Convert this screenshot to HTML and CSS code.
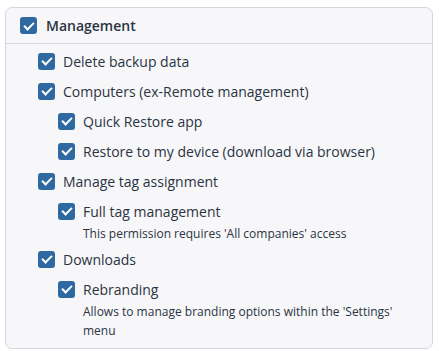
FILE: index.html
```html
<!DOCTYPE html>
<html>
<head>
    <meta charset="UTF-8">
    <title>Permissions</title>
    <link rel="stylesheet" href="styles.css">
</head>
<body>
    <div class="card">
        <div class="card-head">
            <span class="check"></span>
            <span class="head-title">Management</span>
        </div>
        <ul class="perm-list">
            <li><div class="perm"><span class="check"></span>Delete backup data</div></li>
            <li>
                <div class="perm"><span class="check"></span>Computers (ex-Remote management)</div>
                <ul class="perm-list sub">
                    <li><div class="perm"><span class="check"></span>Quick Restore app</div></li>
                    <li><div class="perm"><span class="check"></span>Restore to my device (download via browser)</div></li>
                </ul>
            </li>
            <li>
                <div class="perm"><span class="check"></span>Manage tag assignment</div>
                <ul class="perm-list sub">
                    <li>
                        <div class="perm"><span class="check"></span>Full tag management</div>
                        <p class="hint">This permission requires 'All companies' access</p>
                    </li>
                </ul>
            </li>
            <li>
                <div class="perm"><span class="check"></span>Downloads</div>
                <ul class="perm-list sub">
                    <li>
                        <div class="perm"><span class="check"></span>Rebranding</div>
                        <p class="hint">Allows to manage branding options within the 'Settings' menu</p>
                    </li>
                </ul>
            </li>
        </ul>
    </div>
</body>
</html>
```

FILE: styles.css
```css
body {
    margin: 0;
    padding: 7px 6px 0 5px;
    font-family: "Open Sans", Arial, sans-serif;
    color: #2a3441;
    background: #fff;
}
.card {
    background: #f7f7fa;
    border: 1px solid #d6d6de;
    border-radius: 7px;
    height: 342px;
    box-sizing: border-box;
}
.card-head {
    display: flex;
    align-items: center;
    height: 35px;
    padding-left: 14px;
    border-bottom: 1px solid #d6d6de;
}
.head-title {
    font-size: 14px;
    font-weight: 600;
    margin-left: 9px;
}
.check {
    width: 17px;
    height: 17px;
    border-radius: 3px;
    background: #2f69a1;
    flex-shrink: 0;
    display: inline-flex;
    align-items: center;
    justify-content: center;
}
.check::after {
    content: "";
    width: 8px;
    height: 4px;
    border-left: 2.5px solid #fff;
    border-bottom: 2.5px solid #fff;
    transform: translate(0, -1px) rotate(-45deg);
}
.perm-list {
    list-style: none;
    margin: 0;
    padding: 2px 16px 0 32px;
}
.perm-list.sub {
    padding: 0 0 0 20px;
}
.perm {
    display: flex;
    align-items: center;
    height: 30px;
    font-size: 14px;
}
.perm .check {
    margin-right: 8px;
}
.hint {
    margin: -2px 0 1px 25px;
    font-size: 12px;
    line-height: 19px;
}
```
